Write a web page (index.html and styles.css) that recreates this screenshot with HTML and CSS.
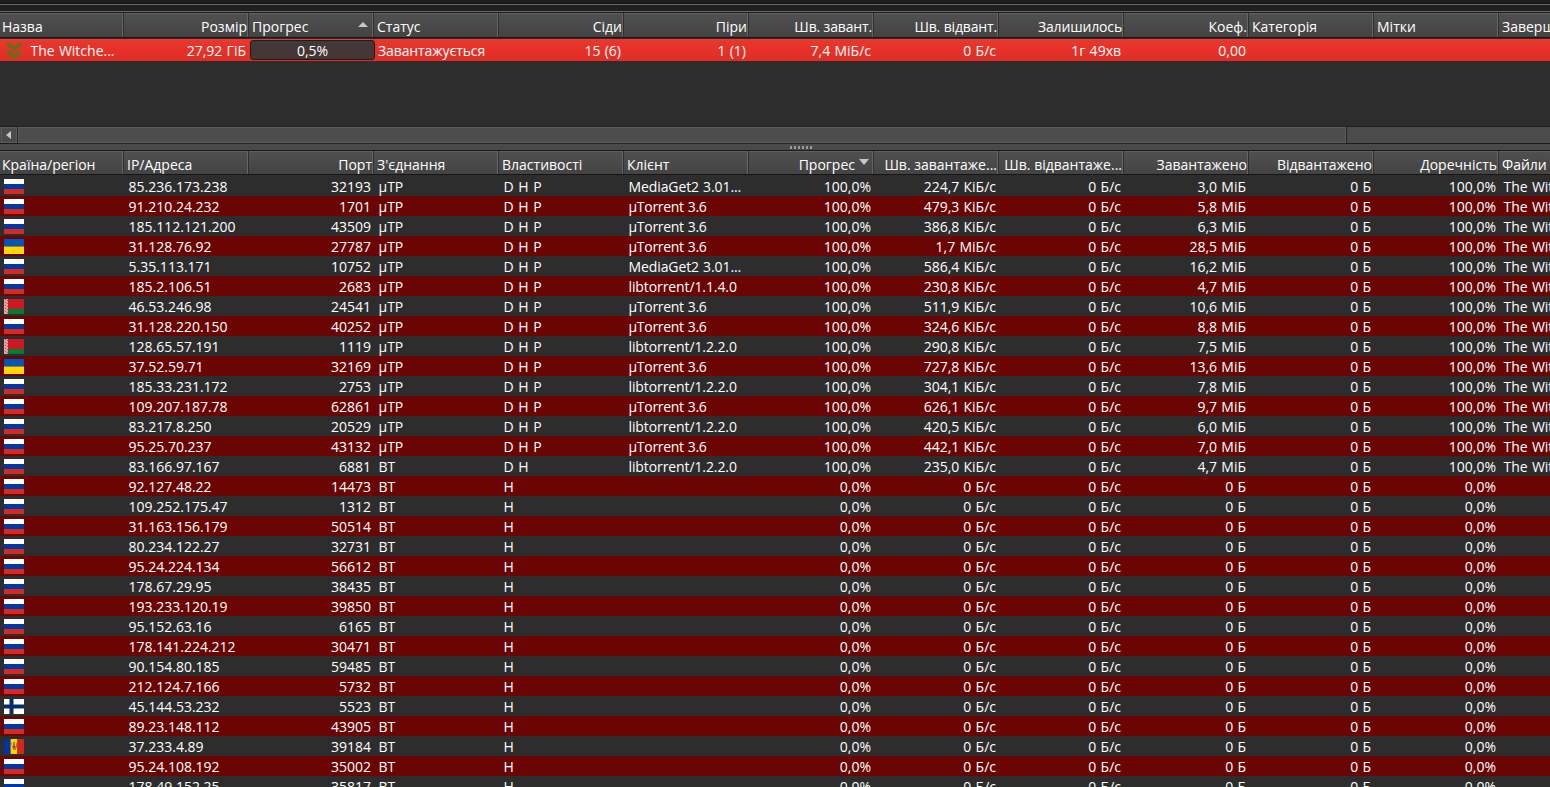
FILE: index.html
```html
<!DOCTYPE html>
<html lang="uk">
<head>
  <meta charset="UTF-8">
  <title>qBittorrent</title>
  <link rel="stylesheet" href="styles.css">
</head>
<body>
  <div class="toolbar"><div class="toolbar-inner"></div></div>

  <div class="torrents">
    <div class="row header">
      <span>Назва</span>
      <span class="num">Розмір</span>
      <span class="sorted">Прогрес <i class="up"></i></span>
      <span>Статус</span>
      <span class="num">Сіди</span>
      <span class="num">Піри</span>
      <span class="num short">Шв. завант.</span>
      <span class="num short">Шв. відвант.</span>
      <span class="num short">Залишилось</span>
      <span class="num">Коеф.</span>
      <span>Категорія</span>
      <span>Мітки</span>
      <span>Завершено</span>
    </div>
    <div class="row selected">
      <span class="name">
        <svg width="16" height="18" viewBox="0 0 16 18" fill="none" stroke="#63701a" stroke-width="3.6"><path d="M1.2 1.5 L8 7 L14.8 1.5 M1.2 9.5 L8 15 L14.8 9.5"/></svg>
        The Witche...
      </span>
      <span class="num">27,92 ГіБ</span>
      <span class="progress">0,5%</span>
      <span class="status">Завантажується</span>
      <span class="num">15 (6)</span>
      <span class="num">1 (1)</span>
      <span class="num">7,4 МіБ/с</span>
      <span class="num">0 Б/с</span>
      <span class="num">1г 49хв</span>
      <span class="num">0,00</span>
      <span></span>
      <span></span>
      <span></span>
    </div>
  </div>

  <div class="scrollbar">
    <div class="arrow"><svg width="5" height="8" viewBox="0 0 5 8"><path d="M5 0 L0 4 L5 8Z" fill="#c8c8c8"/></svg></div>
    <div class="handle"></div>
  </div>
  <div class="splitter"><i></i><i></i><i></i><i></i><i></i><i></i></div>

  <div class="peers">
    <div class="row header">
      <span>Країна/регіон</span>
      <span>IP/Адреса</span>
      <span class="num">Порт</span>
      <span>З'єднання</span>
      <span>Властивості</span>
      <span>Клієнт</span>
      <span class="num">Прогрес<i class="down"></i></span>
      <span class="num">Шв. завантаже...</span>
      <span class="num">Шв. відвантаже...</span>
      <span class="num">Завантажено</span>
      <span class="num">Відвантажено</span>
      <span class="num">Доречність</span>
      <span>Файли</span>
    </div>
    <div id="peerList"></div>
  </div>

  <script src="peers.js"></script>
</body>
</html>
```
FILE: styles.css
```css
body {
  margin: 0;
  height: 787px;
  overflow: hidden;
  background: #2d2d2d;
  color: #fff;
  font-family: 'Open Sans', 'Noto Sans', sans-serif;
  font-size: 14px;
}
.toolbar {
  height: 13px;
  box-sizing: border-box;
  padding-top: 3px;
  background: #1f1f1f;
}
.toolbar-inner {
  height: 9px;
  box-sizing: border-box;
  border-top: 1px solid #111;
  border-bottom: 1px solid #666;
  background: linear-gradient(#6a6a6a 1px, #1f1f1f 1px);
}
.torrents {
  height: 113px;
}
.row {
  display: grid;
  grid-template-columns: 124px repeat(12, 125px);
  width: 1624px;
  height: 20px;
  line-height: 22px;
}
.row span {
  padding: 0 3px 0 4.5px;
  overflow: hidden;
  white-space: pre;
  word-spacing: 0.6px;
}
.row .num {
  text-align: right;
}
.row .props {
  word-spacing: 1px;
}
.row .client {
  letter-spacing: -0.1px;
}
.row .utorrent {
  letter-spacing: -0.3px;
}
.row .status {
  padding-left: 4px;
  letter-spacing: -0.1px;
}
.header {
  height: 25px;
  line-height: 27px;
  background: linear-gradient(#606060 1px, #505050 1px, #434343);
  border-bottom: 1px solid #161616;
}
.header span {
  padding: 0 0 0 3px;
  border-right: 1px solid #2f2f2f;
  box-shadow: inset -1px 0 #666;
  word-spacing: 0;
}
.header span:first-child {
  padding-left: 2px;
}
.header .num {
  padding-right: 1px;
}
.header .short {
  letter-spacing: -0.15px;
}
.torrents .header {
  height: 24px;
}
.sorted {
  display: flex;
  justify-content: space-between;
}
.up {
  width: 0;
  height: 0;
  margin: 9px 5px 0 0;
  border: 5px solid transparent;
  border-top: 0;
  border-bottom: 5px solid #c8c8c8;
}
.down {
  display: inline-block;
  margin: 0 3px 5px 4px;
  border: 5px solid transparent;
  border-bottom: 0;
  border-top: 6px solid #c8c8c8;
}
.selected {
  height: 22px;
  line-height: 23px;
  margin-top: 1px;
  background: linear-gradient(#e9382e, #e22c23);
}
.selected .name {
  display: flex;
  gap: 9px;
  white-space: nowrap;
}
.name svg {
  margin: 3px 0 0 1px;
  flex: none;
}
.selected .progress {
  box-sizing: border-box;
  width: 125px;
  height: 20px;
  margin: 1px 0 0 1px;
  padding: 0;
  line-height: 19px;
  text-align: center;
  background: linear-gradient(#413938, #463534);
  border: 1px solid #241a1a;
  border-radius: 3px;
}
.scrollbar {
  display: flex;
  height: 18px;
  box-sizing: border-box;
  border-top: 1px solid #1f1f1f;
  border-bottom: 1px solid #1b1b1b;
  background: #4b4b4b;
}
.arrow {
  display: flex;
  align-items: center;
  justify-content: center;
  box-sizing: border-box;
  width: 16px;
  margin-left: 1px;
  border: 1px solid #5c5c5c;
}
.arrow svg {
  margin-right: 1px;
}
.handle {
  box-sizing: border-box;
  width: 1328px;
  margin-left: 1px;
  background: #4d4d4d;
  border: 1px solid #5c5c5c;
  outline: 1px solid #242424;
}
.splitter {
  display: flex;
  justify-content: center;
  gap: 2px;
  height: 6px;
  padding-left: 51px;
  background: #4a4a4a;
  border-bottom: 1px solid #1b1b1b;
}
.splitter i {
  width: 2px;
  height: 3px;
  margin-top: 2px;
  background: #9a9a9a;
}
.peers .header {
  height: 23px;
  line-height: 27px;
  margin-bottom: 1px;
}
#peerList .row:nth-child(even) {
  background: #6a0504;
}
.flag {
  display: block;
  margin: 3px 0 0 -0.5px;
}
```
FILE: peers.js
```javascript
const flags = {
  ru: '<path fill="#fff" d="M0 0h20v15H0z"/><path fill="#0039a6" d="M0 5h20v10H0z"/><path fill="#d52b1e" d="M0 10h20v5H0z"/>',
  ua: '<path fill="#0057b8" d="M0 0h20v7.5H0z"/><path fill="#ffd700" d="M0 7.5h20V15H0z"/>',
  by: '<path fill="#ce1720" d="M0 0h20v10H0z"/><path fill="#007c30" d="M0 10h20v5H0z"/><path fill="#e8a0a0" d="M0 0h4v15H0z"/><path stroke="#ce4a50" stroke-dasharray="1 2" d="M1.5 0v15M3.5 1v14"/>',
  fi: '<path fill="#fff" d="M0 0h20v15H0z"/><path stroke="#002f6c" stroke-width="4" d="M7.5 0v15M0 7.5h20"/>',
  md: '<path fill="#0032a0" d="M0 0h7v15H0z"/><path fill="#ffd200" d="M6.6 0h7v15h-7z"/><path fill="#d9241c" d="M13.3 0H20v15h-6.7z"/><path fill="#a77b3b" d="M7 4h1v5h1v2h3V9h1V4h-1v3h-1V3H9v4H8z"/><path fill="#b84a32" d="M9 6h2v3H9z"/>'
};

// country, ip, port, client, download speed, downloaded
const peers = [
  ['ru', '85.236.173.238', 32193, 'MediaGet2 3.01...', '224,7 КіБ/с', '3,0 МіБ'],
  ['ru', '91.210.24.232', 1701, 'μTorrent 3.6', '479,3 КіБ/с', '5,8 МіБ'],
  ['ru', '185.112.121.200', 43509, 'μTorrent 3.6', '386,8 КіБ/с', '6,3 МіБ'],
  ['ua', '31.128.76.92', 27787, 'μTorrent 3.6', '1,7 МіБ/с', '28,5 МіБ'],
  ['ru', '5.35.113.171', 10752, 'MediaGet2 3.01...', '586,4 КіБ/с', '16,2 МіБ'],
  ['ru', '185.2.106.51', 2683, 'libtorrent/1.1.4.0', '230,8 КіБ/с', '4,7 МіБ'],
  ['by', '46.53.246.98', 24541, 'μTorrent 3.6', '511,9 КіБ/с', '10,6 МіБ'],
  ['ru', '31.128.220.150', 40252, 'μTorrent 3.6', '324,6 КіБ/с', '8,8 МіБ'],
  ['by', '128.65.57.191', 1119, 'libtorrent/1.2.2.0', '290,8 КіБ/с', '7,5 МіБ'],
  ['ua', '37.52.59.71', 32169, 'μTorrent 3.6', '727,8 КіБ/с', '13,6 МіБ'],
  ['ru', '185.33.231.172', 2753, 'libtorrent/1.2.2.0', '304,1 КіБ/с', '7,8 МіБ'],
  ['ru', '109.207.187.78', 62861, 'μTorrent 3.6', '626,1 КіБ/с', '9,7 МіБ'],
  ['ru', '83.217.8.250', 20529, 'libtorrent/1.2.2.0', '420,5 КіБ/с', '6,0 МіБ'],
  ['ru', '95.25.70.237', 43132, 'μTorrent 3.6', '442,1 КіБ/с', '7,0 МіБ'],
  ['ru', '83.166.97.167', 6881, 'libtorrent/1.2.2.0', '235,0 КіБ/с', '4,7 МіБ', 'BT', 'D H'],
  ['ru', '92.127.48.22', 14473],
  ['ru', '109.252.175.47', 1312],
  ['ru', '31.163.156.179', 50514],
  ['ru', '80.234.122.27', 32731],
  ['ru', '95.24.224.134', 56612],
  ['ru', '178.67.29.95', 38435],
  ['ru', '193.233.120.19', 39850],
  ['ru', '95.152.63.16', 6165],
  ['ru', '178.141.224.212', 30471],
  ['ru', '90.154.80.185', 59485],
  ['ru', '212.124.7.166', 5732],
  ['fi', '45.144.53.232', 5523],
  ['ru', '89.23.148.112', 43905],
  ['md', '37.233.4.89', 39184],
  ['ru', '95.24.108.192', 35002],
  ['ru', '178.49.152.25', 35817]
];

document.getElementById('peerList').innerHTML = peers.map(function(p) {
  const active = p.length > 3;
  const conn = p[6] || (active ? 'μTP' : 'BT');
  const props = p[7] || (active ? 'D H P' : 'H');
  const percent = active ? '100,0%' : '0,0%';
  const client = p[3] || '';
  return `<div class="row">
    <span><svg class="flag" width="20" height="15" viewBox="0 0 20 15">${flags[p[0]]}</svg></span>
    <span>${p[1]}</span>
    <span class="num">${p[2]}</span>
    <span>${conn}</span>
    <span class="props">${props}</span>
    <span class="client ${client.startsWith('μ') ? 'utorrent' : ''}">${client}</span>
    <span class="num">${percent}</span>
    <span class="num">${p[4] || '0 Б/с'}</span>
    <span class="num">0 Б/с</span>
    <span class="num">${p[5] || '0 Б'}</span>
    <span class="num">0 Б</span>
    <span class="num">${percent}</span>
    <span>${active ? 'The Witcher 3' : ''}</span>
  </div>`;
}).join('');
```
